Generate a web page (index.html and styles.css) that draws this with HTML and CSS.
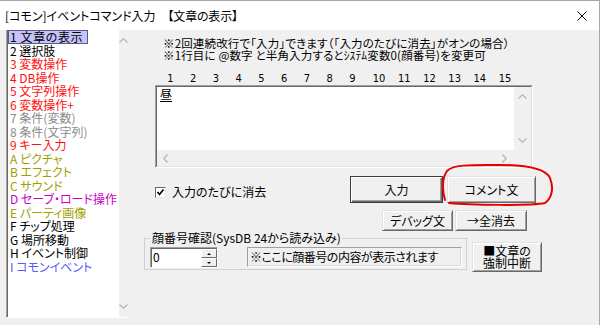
FILE: index.html
```html
<!DOCTYPE html>
<html lang="ja">
<head>
<meta charset="utf-8">
<title>[コモン]イベントコマンド入力</title>
<link rel="stylesheet" href="styles.css">
</head>
<body>
<div class="window">
  <div class="titlebar">
    <span class="title">[コモン]イベントコマンド入力　<span class="title-sub">【文章の表示】</span></span>
    <svg class="close" width="10" height="10" viewBox="0 0 10 10"><path d="M0.5 0.5 L9.5 9.5 M9.5 0.5 L0.5 9.5" stroke="#000" stroke-width="1" fill="none"/></svg>
  </div>
  <div class="client">
    <div class="cmdlist">
      <ul class="items">
        <li class="c-black"><span class="sel">1 文章の表示</span></li>
        <li class="c-black"><span>2 選択肢</span></li>
        <li class="c-red"><span>3 変数操作</span></li>
        <li class="c-red"><span>4 DB操作</span></li>
        <li class="c-red"><span>5 文字列操作</span></li>
        <li class="c-red"><span>6 変数操作+</span></li>
        <li class="c-gray"><span>7 条件(変数)</span></li>
        <li class="c-gray"><span>8 条件(文字列)</span></li>
        <li class="c-red"><span>9 キー入力</span></li>
        <li class="c-olive"><span>A ピクチャ</span></li>
        <li class="c-olive"><span>B エフェクト</span></li>
        <li class="c-olive"><span>C サウンド</span></li>
        <li class="c-magenta"><span>D セーブ・ロード操作</span></li>
        <li class="c-olive"><span>E パーティ画像</span></li>
        <li class="c-black"><span>F チップ処理</span></li>
        <li class="c-black"><span>G 場所移動</span></li>
        <li class="c-black"><span>H イベント制御</span></li>
        <li class="c-blue"><span>I コモンイベント</span></li>
      </ul>
      <div class="vscroll list-scroll">
        <svg width="9" height="5" viewBox="0 0 9 5"><path d="M0.5 4.5 L4.5 0.8 L8.5 4.5" stroke="#b4b4b4" stroke-width="1.2" fill="none"/></svg>
        <svg width="9" height="5" viewBox="0 0 9 5"><path d="M0.5 0.5 L4.5 4.2 L8.5 0.5" stroke="#b4b4b4" stroke-width="1.2" fill="none"/></svg>
      </div>
    </div>

    <div class="panel">
      <div class="notes">
        <p>※2回連続改行で「入力」できます（「入力のたびに消去」がオンの場合）</p>
        <p>※1行目に @数字 と半角入力するとｼｽﾃﾑ変数0(顔番号)を変更可</p>
      </div>
      <div class="ruler">
        <span>1</span><span>2</span><span>3</span><span>4</span><span>5</span><span>6</span><span>7</span><span>8</span><span>9</span><span class="wide first-wide">10</span><span class="wide">11</span><span class="wide">12</span><span class="wide">13</span><span class="wide">14</span><span class="wide">15</span>
      </div>
      <div class="editor">
        <div class="editor-inner">
          <div class="edit-area"><span class="edit-text">昼</span></div>
          <div class="vscroll edit-vscroll">
            <svg width="9" height="5" viewBox="0 0 9 5"><path d="M0.5 4.5 L4.5 0.8 L8.5 4.5" stroke="#b4b4b4" stroke-width="1.2" fill="none"/></svg>
            <svg width="9" height="5" viewBox="0 0 9 5"><path d="M0.5 0.5 L4.5 4.2 L8.5 0.5" stroke="#b4b4b4" stroke-width="1.2" fill="none"/></svg>
          </div>
          <div class="hscroll">
            <svg width="5" height="9" viewBox="0 0 5 9"><path d="M4.5 0.5 L0.8 4.5 L4.5 8.5" stroke="#b4b4b4" stroke-width="1.2" fill="none"/></svg>
            <svg width="5" height="9" viewBox="0 0 5 9"><path d="M0.5 0.5 L4.2 4.5 L0.5 8.5" stroke="#b4b4b4" stroke-width="1.2" fill="none"/></svg>
          </div>
          <div class="corner"></div>
        </div>
      </div>

      <div class="row-actions">
        <label class="check">
          <span class="checkbox"><svg width="9" height="9" viewBox="0 0 9 9"><path d="M1.5 4 L3.5 6.5 L7.5 1.5" stroke="#000" stroke-width="1.6" fill="none"/></svg></span>
          <span>入力のたびに消去</span>
        </label>
        <div class="btn btn-default btn-input">入力</div>
        <div class="btn btn-comment">コメント文</div>
      </div>

      <div class="row-secondary">
        <div class="btn btn-debug">デバッグ文</div>
        <div class="btn btn-clear">→全消去</div>
      </div>

      <div class="row-bottom">
        <fieldset class="group">
          <legend>顔番号確認(SysDB 24から読み込み)</legend>
          <div class="group-body">
            <div class="spin">
              <div class="spin-val">0</div>
              <div class="spin-btns">
                <div class="spin-btn"><span class="tri-up"></span></div>
                <div class="spin-btn"><span class="tri-down"></span></div>
              </div>
            </div>
            <div class="display">※ここに顔番号の内容が表示されます</div>
          </div>
        </fieldset>
        <div class="btn btn-stop"><span>■文章の</span><span>強制中断</span></div>
      </div>
    </div>
  </div>
  <svg class="annot" width="600" height="325" viewBox="0 0 600 325">
    <path d="M445 200 C442 190 442 178 447 171 C453 164 475 165 500 165 C525 165 545 168 550 178 C554 188 552 198 545 203 C530 206 470 205 449 203" stroke="#e80000" stroke-width="2" fill="none" stroke-linecap="round"/>
  </svg>
</div>
</body>
</html>
```
FILE: styles.css
```css
* { box-sizing: border-box; }
html, body { margin: 0; padding: 0; }
body {
  width: 600px;
  height: 325px;
  overflow: hidden;
  background: #f0f0f0;
  font-family: "Noto Sans CJK JP", "Noto Sans", sans-serif;
  font-size: 12px;
  font-feature-settings: "palt";
  color: #000;
}
.window {
  position: relative;
  width: 600px;
  height: 325px;
  border-top: 1px solid #a8a8a8;
  border-right: 1px solid #a8a8a8;
  display: flex;
  flex-direction: column;
  background: #f0f0f0;
}
.titlebar {
  height: 29px;
  flex: 0 0 29px;
  background: #fff;
  display: flex;
  align-items: center;
  justify-content: space-between;
  padding: 0 12px 0 5px;
}
.title { line-height: 14px; white-space: nowrap; }
.title-sub { letter-spacing: -0.2px; }
.close { display: block; }

.client { flex: 1; display: flex; align-items: flex-start; }

/* command list */
.cmdlist {
  margin-left: 6px;
  width: 122px;
  height: 288px;
  display: flex;
  background: #fff;
  border-left: 1px solid #a0a0a0;
  border-right: 1px solid #fff;
  border-bottom: 1px solid #fff;
  box-shadow: inset 1px 0 #696969;
}
.items {
  flex: 1;
  margin: 0;
  padding: 0 0 0 1px;
  list-style: none;
  font-size: 12px;
}
.items li {
  height: 13.5px;
  line-height: 13.5px;
  white-space: nowrap;
}
.items li span {
  display: inline-block;
  border: 1px solid transparent;
  padding: 0 1px;
  line-height: 11.5px;
  vertical-align: top;
}
.items li span.sel {
  background: #c4c4fa;
  border-color: #5a5a8a;
  padding-right: 4px;
  letter-spacing: 0.6px;
}
.c-black { color: #000; }
.c-red { color: #ff1010; }
.c-gray { color: #8a8a8a; }
.c-olive { color: #a0a000; }
.c-magenta { color: #c800c8; }
.c-blue { color: #5a5aff; }

.vscroll {
  background: #f0f0f0;
  display: flex;
  flex-direction: column;
  align-items: center;
  justify-content: space-between;
}
.vscroll svg, .hscroll svg { display: block; }
.list-scroll { width: 17px; padding: 8px 0 8px; }

/* right panel */
.panel {
  flex: 1;
  display: flex;
  flex-direction: column;
  align-items: flex-start;
}
.notes { margin: 7px 0 0 35px; font-size: 11.5px; letter-spacing: 0.15px; }
.notes p { margin: 0; line-height: 12px; white-space: nowrap; }

.ruler {
  margin: 12px 0 0 31px;
  display: flex;
  height: 12px;
  line-height: 12px;
  font-family: "Liberation Sans Narrow", "DejaVu Sans Condensed", "Liberation Sans", sans-serif;
  font-stretch: condensed;
  font-size: 11px;
}
.ruler span { width: 22.75px; text-align: center; }
.ruler span.wide { width: 25.2px; }
.ruler span.first-wide { margin-left: 2.75px; }

.editor {
  margin-left: 27px;
  width: 378px;
  height: 83px;
  border: 1px solid;
  border-color: #a0a0a0 #fff #fff #a0a0a0;
}
.editor-inner {
  width: 100%;
  height: 100%;
  border: 1px solid;
  border-color: #696969 #e3e3e3 #e3e3e3 #696969;
  display: grid;
  grid-template-columns: 1fr 17px;
  grid-template-rows: 1fr 16px;
}
.edit-area { background: #fff; padding: 0 3px; line-height: 14px; }
.edit-text { text-decoration: underline; text-underline-offset: 2px; }
.edit-vscroll { padding: 7px 0 7px; }
.hscroll {
  background: #f0f0f0;
  display: flex;
  align-items: center;
  justify-content: space-between;
  padding: 0 7px 0 6px;
}
.corner { background: #f0f0f0; }

/* buttons */
.btn {
  display: flex;
  align-items: center;
  justify-content: center;
  background: #f0f0f0;
  border: 1px solid;
  border-color: #e3e3e3 #696969 #696969 #e3e3e3;
  box-shadow: inset 1px 1px #fff, inset -1px -1px #a0a0a0;
  line-height: 12px;
  white-space: nowrap;
}
.btn-default {
  border-color: #3c3c3c;
  box-shadow: inset 1px 1px #fff, inset -1px -1px #696969, inset -2px -2px #a0a0a0;
}

.row-actions {
  margin: 8px 0 0 27px;
  display: flex;
  align-items: flex-start;
}
.check {
  flex: 0 0 195px;
  margin-top: 10px;
  display: flex;
  align-items: center;
  gap: 6px;
  line-height: 12px;
}
.checkbox {
  width: 11px;
  height: 11px;
  background: #fff;
  border: 1px solid;
  border-color: #696969 #e3e3e3 #e3e3e3 #696969;
  display: flex;
  align-items: center;
  justify-content: center;
}
.checkbox svg { display: block; }
.btn-input { width: 93px; height: 27px; }
.btn-comment { width: 89px; height: 27px; margin-left: 4px; }

.row-secondary {
  margin: 7px 0 0 254px;
  display: flex;
  gap: 2px;
}
.btn-debug { width: 71px; height: 21px; }
.btn-clear { width: 72px; height: 21px; }

.row-bottom {
  margin: 1px 0 0 16px;
  display: flex;
  align-items: flex-start;
}
.group {
  margin: 0;
  width: 323px;
  padding: 3px 4px 1px 5px;
  border: 1px solid #d0d0d0;
}
.group legend {
  padding: 0 1px 0 2px;
  line-height: 12px;
  white-space: nowrap;
}
.group-body { display: flex; align-items: flex-start; }
.spin {
  width: 68px;
  height: 21px;
  display: flex;
  border: 1px solid;
  border-color: #a0a0a0 #fff #fff #a0a0a0;
  box-shadow: inset 1px 1px #696969;
  background: #fff;
}
.spin-val { flex: 1; padding: 2px 0 0 2px; line-height: 14px; }
.spin-btns {
  width: 16px;
  display: flex;
  flex-direction: column;
  margin: 1px 0 0 0;
}
.spin-btn {
  flex: 1;
  background: #f0f0f0;
  border: 1px solid;
  border-color: #fff #696969 #696969 #fff;
  display: flex;
  align-items: center;
  justify-content: center;
}
.tri-up, .tri-down {
  width: 0;
  height: 0;
  border-left: 2px solid transparent;
  border-right: 2px solid transparent;
}
.tri-up { border-bottom: 2px solid #000; }
.tri-down { border-top: 2px solid #000; }

.display {
  margin-left: 29px;
  width: 215px;
  height: 20px;
  border: 1px solid;
  border-color: #a0a0a0 #fff #fff #a0a0a0;
  box-shadow: inset -1px -1px #d8d8d8;
  padding: 2px 0 0 2px;
  line-height: 14px;
  white-space: nowrap;
  letter-spacing: -0.5px;
}
.btn-stop {
  margin: 10px 0 0 5px;
  width: 70px;
  height: 30px;
  flex-direction: column;
  justify-content: flex-start;
  padding-top: 2px;
  font-size: 12px;
}

.annot {
  position: absolute;
  top: -1px;
  left: 0;
  pointer-events: none;
}
```
